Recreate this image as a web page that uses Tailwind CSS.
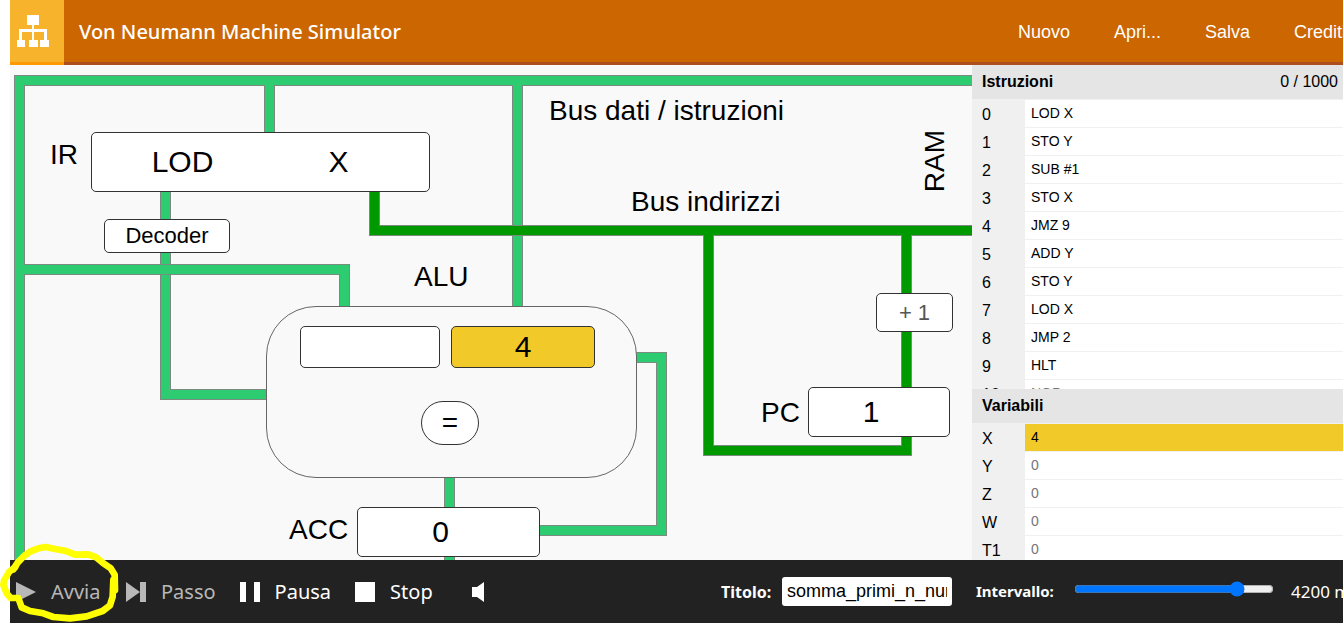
<!DOCTYPE html>
<html lang="it">
<head>
<meta charset="utf-8">
<title>Von Neumann Machine Simulator</title>
<script src="https://cdn.jsdelivr.net/npm/@tailwindcss/browser@4"></script>
</head>
<body class="bg-white font-['Liberation_Sans',Arial,sans-serif] text-black">
<div class="relative flex h-screen flex-col overflow-hidden pl-[10px]">

  <header class="flex h-[65px] shrink-0 bg-[#cc6600] text-white">
    <a href="#" aria-label="Home" class="block w-[54px] shrink-0 border-b-[3px] border-[#ff9900] bg-[#f7b32b]">
      <svg class="h-[62px] w-[54px]" viewBox="0 0 54 62" fill="#fff" aria-hidden="true">
        <path d="M17 15h12v10h-5v4h13v11h2v7h-9v-7h4v-8H24v8h4v7h-9v-7h3v-8H12v8h3v7H7v-7h2V29h13v-4h-5z"/>
      </svg>
    </a>
    <div class="flex min-w-0 flex-1 items-center border-b-[3px] border-[#ad4f1c] pt-[2px] pl-[15px]">
      <h1 class="font-['Noto_Sans',sans-serif] text-[20px] font-medium whitespace-nowrap">Von Neumann Machine Simulator</h1>
      <nav class="ml-auto flex w-[325px] shrink-0 gap-[44px] overflow-hidden text-[18px] whitespace-nowrap">
        <a href="#">Nuovo</a><a href="#">Apri...</a><a href="#">Salva</a><a href="#">Crediti</a>
      </nav>
    </div>
  </header>

  <main class="flex min-h-0 flex-1">
    <section aria-label="CPU" class="relative min-w-0 flex-1 overflow-hidden bg-[#f9f9f9] text-[28px] leading-8 whitespace-nowrap">
      <svg class="absolute top-0 left-0 h-[495px] w-[962px]" viewBox="10 65 962 495" fill="none" aria-hidden="true">
        <g stroke="#7c8a82" stroke-width="11">
          <path d="M165.5 190V394.5H270M269.5 80V135M517.5 80V310M449.5 475V560M630 357.5H661.5V530.5H535"/>
          <path d="M980 80.5H19.5V570M19.5 269.5H344.5V310"/>
        </g>
        <path d="M165.5 190V394.5H270M269.5 80V135M517.5 80V310M449.5 475V560M630 357.5H661.5V530.5H535" stroke="#2ecc71" stroke-width="9"/>
        <path d="M24 269.5H344.5V310" stroke="#7c8a82" stroke-width="11"/>
        <path d="M980 80.5H19.5V570M19.5 269.5H344.5V310" stroke="#2ecc71" stroke-width="9"/>
        <path d="M374.5 190V230.5H980M708.5 230V450.5H906.5V230" stroke="#7c8a7c" stroke-width="11"/>
        <path d="M374.5 190V230.5H980M708.5 230V450.5H906.5V230" stroke="#009900" stroke-width="9"/>
      </svg>

      <span class="absolute top-[74px] left-[40px]">IR</span>
      <div class="absolute top-[67px] left-[81px] flex h-[60px] w-[339px] items-center rounded-[5px] border border-[#333] bg-white text-[30px]">
        <span class="w-[181px] text-center">LOD</span><span class="w-[131px] text-center">X</span>
      </div>
      <div class="absolute top-[154px] left-[94px] flex h-[34px] w-[126px] items-center justify-center rounded-[5px] border border-[#333] bg-white text-[22px]">Decoder</div>

      <span class="absolute top-[30px] left-[539px]">Bus dati / istruzioni</span>
      <span class="absolute top-[121px] left-[621px]">Bus indirizzi</span>
      <span class="absolute top-[65px] left-[909px] rotate-180 [writing-mode:vertical-rl]">RAM</span>

      <span class="absolute top-[196px] left-[404px]">ALU</span>
      <div class="absolute top-[241px] left-[256px] h-[172px] w-[371px] rounded-[50px] border border-[#666] bg-[#f9f9f9]">
        <div class="flex gap-[11px] pt-[19px] pl-[33px]">
          <div class="h-[42px] w-[140px] rounded-[5px] border border-[#333] bg-white"></div>
          <div class="flex h-[42px] w-[144px] items-center justify-center rounded-[5px] border border-[#333] bg-[#f1c928] text-[30px]">4</div>
        </div>
        <div class="mt-[33px] ml-[154px] flex h-[44px] w-[58px] items-center justify-center rounded-[22px] border border-[#333] bg-white">=</div>
      </div>

      <span class="absolute top-[449px] left-[279px]">ACC</span>
      <div class="absolute top-[442px] left-[347px] flex h-[50px] w-[183px] items-center justify-center rounded-[5px] border border-[#333] bg-white pr-4 text-[30px]">0</div>

      <div class="absolute top-[228px] left-[866px] flex h-[39px] w-[77px] items-center justify-center rounded-[5px] border border-[#333] bg-white text-[22px] text-[#555]">+ 1</div>
      <span class="absolute top-[332px] left-[751px]">PC</span>
      <div class="absolute top-[322px] left-[798px] flex h-[50px] w-[142px] items-center justify-center rounded-[5px] border border-[#333] bg-white pr-4 text-[30px]">1</div>
    </section>

    <aside class="flex w-[371px] shrink-0 flex-col bg-[#f0f0f0] text-[16px]">
      <div class="flex h-[34px] shrink-0 items-center bg-[#e5e5e5] pr-[5px] pl-[10px]">
        <h2 class="font-bold">Istruzioni</h2><span class="ml-auto">0 / 1000</span>
      </div>
      <div class="h-[290px] shrink-0 overflow-hidden">
        <label class="flex h-[28px] items-center pl-[10px]"><span class="w-[43px] pt-1">0</span><input class="mt-px h-[27px] min-w-0 flex-1 bg-white px-[6px] pb-[2px] text-[14px]" value="LOD X"></label>
        <label class="flex h-[28px] items-center pl-[10px]"><span class="w-[43px] pt-1">1</span><input class="mt-px h-[27px] min-w-0 flex-1 bg-white px-[6px] pb-[2px] text-[14px]" value="STO Y"></label>
        <label class="flex h-[28px] items-center pl-[10px]"><span class="w-[43px] pt-1">2</span><input class="mt-px h-[27px] min-w-0 flex-1 bg-white px-[6px] pb-[2px] text-[14px]" value="SUB #1"></label>
        <label class="flex h-[28px] items-center pl-[10px]"><span class="w-[43px] pt-1">3</span><input class="mt-px h-[27px] min-w-0 flex-1 bg-white px-[6px] pb-[2px] text-[14px]" value="STO X"></label>
        <label class="flex h-[28px] items-center pl-[10px]"><span class="w-[43px] pt-1">4</span><input class="mt-px h-[27px] min-w-0 flex-1 bg-white px-[6px] pb-[2px] text-[14px]" value="JMZ 9"></label>
        <label class="flex h-[28px] items-center pl-[10px]"><span class="w-[43px] pt-1">5</span><input class="mt-px h-[27px] min-w-0 flex-1 bg-white px-[6px] pb-[2px] text-[14px]" value="ADD Y"></label>
        <label class="flex h-[28px] items-center pl-[10px]"><span class="w-[43px] pt-1">6</span><input class="mt-px h-[27px] min-w-0 flex-1 bg-white px-[6px] pb-[2px] text-[14px]" value="STO Y"></label>
        <label class="flex h-[28px] items-center pl-[10px]"><span class="w-[43px] pt-1">7</span><input class="mt-px h-[27px] min-w-0 flex-1 bg-white px-[6px] pb-[2px] text-[14px]" value="LOD X"></label>
        <label class="flex h-[28px] items-center pl-[10px]"><span class="w-[43px] pt-1">8</span><input class="mt-px h-[27px] min-w-0 flex-1 bg-white px-[6px] pb-[2px] text-[14px]" value="JMP 2"></label>
        <label class="flex h-[28px] items-center pl-[10px]"><span class="w-[43px] pt-1">9</span><input class="mt-px h-[27px] min-w-0 flex-1 bg-white px-[6px] pb-[2px] text-[14px]" value="HLT"></label>
        <label class="flex h-[28px] items-center pl-[10px]"><span class="w-[43px] pt-1">10</span><input class="mt-px h-[27px] min-w-0 flex-1 bg-white px-[6px] pb-[2px] text-[14px] placeholder:text-[#757575]" placeholder="NOP"></label>
      </div>
      <div class="flex h-[34px] shrink-0 items-center bg-[#e5e5e5] pl-[10px]"><h2 class="font-bold">Variabili</h2></div>
      <div class="min-h-0 flex-1 overflow-hidden">
        <label class="flex h-[28px] items-center pl-[10px]"><span class="w-[43px] pt-1">X</span><input class="mt-px h-[27px] min-w-0 flex-1 bg-[#f1c928] px-[6px] pb-[2px] text-[14px]" value="4"></label>
        <label class="flex h-[28px] items-center pl-[10px]"><span class="w-[43px] pt-1">Y</span><input class="mt-px h-[27px] min-w-0 flex-1 bg-white px-[6px] pb-[2px] text-[14px] placeholder:text-[#757575]" placeholder="0"></label>
        <label class="flex h-[28px] items-center pl-[10px]"><span class="w-[43px] pt-1">Z</span><input class="mt-px h-[27px] min-w-0 flex-1 bg-white px-[6px] pb-[2px] text-[14px] placeholder:text-[#757575]" placeholder="0"></label>
        <label class="flex h-[28px] items-center pl-[10px]"><span class="w-[43px] pt-1">W</span><input class="mt-px h-[27px] min-w-0 flex-1 bg-white px-[6px] pb-[2px] text-[14px] placeholder:text-[#757575]" placeholder="0"></label>
        <label class="flex h-[28px] items-center pl-[10px]"><span class="w-[43px] pt-1">T1</span><input class="mt-px h-[27px] min-w-0 flex-1 bg-white px-[6px] pb-[2px] text-[14px] placeholder:text-[#757575]" placeholder="0"></label>
      </div>
    </aside>
  </main>

  <footer class="flex h-[63px] shrink-0 items-center bg-[#222] pl-[6px] font-['Noto_Sans',sans-serif] text-[20px] whitespace-nowrap text-white">
    <div class="flex items-center gap-[24px]">
      <button class="flex w-[86px] items-center gap-[15px] text-[#b8b8b8]"><svg class="size-[20px]" viewBox="0 0 20 20" fill="currentColor" aria-hidden="true"><path d="M0 0L20 10L0 20z"/></svg>Avvia</button>
      <button class="flex items-center gap-[15px] text-[#b8b8b8]"><svg class="size-[20px]" viewBox="0 0 20 20" fill="currentColor" aria-hidden="true"><path d="M0 0L14 10L0 20zM14 0h6v20h-6z"/></svg>Passo</button>
      <button class="flex items-center gap-[15px]"><svg class="size-[20px]" viewBox="0 0 20 20" fill="currentColor" aria-hidden="true"><path d="M0 0h6v20H0zM14 0h6v20h-6z"/></svg>Pausa</button>
      <button class="flex items-center gap-[15px]"><svg class="size-[20px]" viewBox="0 0 20 20" fill="currentColor" aria-hidden="true"><path d="M0 0h20v20H0z"/></svg>Stop</button>
      <button aria-label="Audio" class="ml-[15px]"><svg class="h-[20px] w-[12px]" viewBox="0 0 12 20" fill="currentColor" aria-hidden="true"><path d="M0 5h5L12 0v20L5 15H0z"/></svg></button>
    </div>
    <div class="ml-auto flex w-[622px] shrink-0 items-center overflow-hidden text-[17px]">
      <label for="titolo" class="w-[61px] shrink-0 text-[16px] font-bold">Titolo:</label>
      <input id="titolo" class="h-[29px] w-[170px] shrink-0 rounded-[3px] bg-white px-[5px] font-['Liberation_Sans',Arial,sans-serif] text-[18px] text-black" value="somma_primi_n_numeri">
      <label for="intervallo" class="ml-[24px] w-[98px] shrink-0 text-[15px] font-bold">Intervallo:</label>
      <input id="intervallo" type="range" min="0" max="5000" step="100" value="4200" class="mb-[6px] w-[200px] shrink-0 accent-[#0075ff]">
      <output for="intervallo" class="ml-[17px]">4200 ms</output>
    </div>
  </footer>

  <svg class="pointer-events-none absolute bottom-0 left-0 h-[93px] w-[130px]" viewBox="0 0 390 279" fill="none" stroke="#ffff00" stroke-width="20" stroke-linecap="round" stroke-linejoin="round" aria-hidden="true">
    <path d="M40 118L53 98L72 78L92 64L115 55L137 51L165 57L195 62L225 74L265 73L290 83L310 100L332 115L344 134L345 180"/>
    <path d="M340 150L338 200L330 226L308 243L260 259L210 265L160 261L130 250L90 243L65 232L55 204H32L20 190L10 165L12 152L28 125L45 112"/>
  </svg>
</div>
</body>
</html>
